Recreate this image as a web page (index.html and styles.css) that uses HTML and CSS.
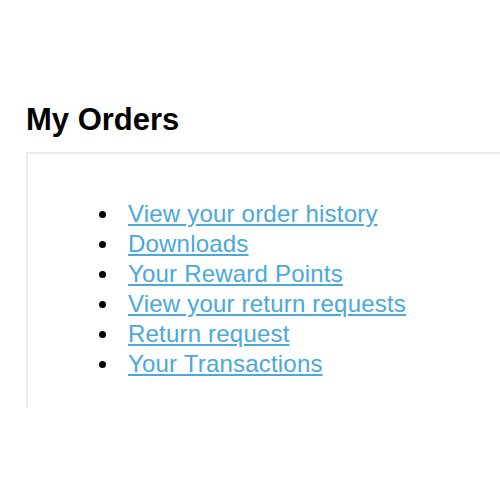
FILE: index.html
```html
<!DOCTYPE html>
<html lang="en">
<head>
  <meta charset="UTF-8">
  <title>My Orders</title>
  <link rel="stylesheet" href="styles.css">
</head>
<body>
  <div class="account">
    <h2>My Orders</h2>
    <div class="content">
      <ul class="links">
        <li><a href="#">View your order history</a></li>
        <li><a href="#">Downloads</a></li>
        <li><a href="#">Your Reward Points</a></li>
        <li><a href="#">View your return requests</a></li>
        <li><a href="#">Return request</a></li>
        <li><a href="#">Your Transactions</a></li>
      </ul>
    </div>
  </div>
</body>
</html>
```

FILE: styles.css
```css
body {
  margin: 0;
  font-family: "Liberation Sans", Arial, sans-serif;
  background: #fff;
  color: #000;
}
.account {
  padding: 103px 0 0 26px;
}
h2 {
  margin: 0 0 15px;
  font-size: 31px;
  line-height: 34px;
  font-weight: bold;
}
.content {
  border-top: 2px solid #ececec;
  border-left: 2px solid #ececec;
  padding: 45px 0 29px;
}
.links {
  margin: 0;
  padding-left: 71px;
  list-style: none;
  font-size: 24px;
  line-height: 30px;
}
.links li {
  display: flex;
  align-items: center;
}
.links li::before {
  content: "";
  width: 7px;
  height: 7px;
  border-radius: 50%;
  background: #000;
  margin-right: 22px;
}
.links a {
  color: #4aa8dc;
  text-decoration: underline;
  letter-spacing: 0.2px;
}
```
